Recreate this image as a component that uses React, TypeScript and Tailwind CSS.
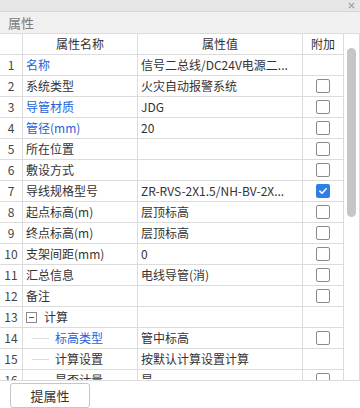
import * as React from "react"

type Row = {
  no: number
  name: string
  value?: string
  blue?: boolean
  check?: "on" | "off"
  kind?: "group" | "child"
}

const rows: Row[] = [
  { no: 1, name: "名称", value: "信号二总线/DC24V电源二...", blue: true },
  { no: 2, name: "系统类型", value: "火灾自动报警系统", check: "off" },
  { no: 3, name: "导管材质", value: "JDG", blue: true, check: "off" },
  { no: 4, name: "管径(mm)", value: "20", blue: true, check: "off" },
  { no: 5, name: "所在位置", check: "off" },
  { no: 6, name: "敷设方式", check: "off" },
  { no: 7, name: "导线规格型号", value: "ZR-RVS-2X1.5/NH-BV-2X...", check: "on" },
  { no: 8, name: "起点标高(m)", value: "层顶标高", check: "off" },
  { no: 9, name: "终点标高(m)", value: "层顶标高", check: "off" },
  { no: 10, name: "支架间距(mm)", value: "0", check: "off" },
  { no: 11, name: "汇总信息", value: "电线导管(消)", check: "off" },
  { no: 12, name: "备注", check: "off" },
  { no: 13, name: "计算", kind: "group" },
  { no: 14, name: "标高类型", value: "管中标高", blue: true, check: "off", kind: "child" },
  { no: 15, name: "计算设置", value: "按默认计算设置计算", kind: "child" },
  { no: 16, name: "是否计量", value: "是", check: "off", kind: "child" },
]

function Check({ on }: { on: boolean }) {
  if (on) {
    return (
      <span className="flex h-[14px] w-[14px] items-center justify-center rounded-[2px] bg-[#2f7fe6]">
        <svg viewBox="0 0 12 12" className="h-[10px] w-[10px]" aria-hidden="true">
          <path d="M2.2 6.2 4.8 8.6 9.8 3.4" stroke="#fff" strokeWidth="1.8" fill="none" strokeLinecap="round" strokeLinejoin="round" />
        </svg>
      </span>
    )
  }
  return <span className="block h-[14px] w-[14px] rounded-[2px] border border-[#8a8a8a] bg-white" />
}

function NameCell({ row }: { row: Row }) {
  const color = row.blue ? "text-[#2462d8]" : "text-[#333]"
  if (row.kind === "group") {
    return (
      <div className="flex items-center pl-[3px]">
        <span className="flex h-[11px] w-[11px] items-center justify-center border border-[#8a8a8a] bg-white">
          <span className="block h-px w-[5px] bg-[#555]" />
        </span>
        <span className={`ml-[7px] ${color}`}>{row.name}</span>
      </div>
    )
  }
  if (row.kind === "child") {
    return (
      <div className="flex items-center">
        <span className="ml-[9px] block h-px w-[17px] bg-[#dcdcdc]" />
        <span className={`ml-[6px] truncate ${color}`}>{row.name}</span>
      </div>
    )
  }
  return <div className={`truncate pl-[3px] ${color}`}>{row.name}</div>
}

export default function App() {
  return (
    <div
      className="flex h-[408px] w-[360px] flex-col overflow-hidden bg-white text-[12px] text-[#333]"
      style={{ fontFamily: '"Noto Sans CJK SC", "Noto Sans", sans-serif' }}
    >
      <div className="flex h-[12px] shrink-0 items-center justify-end border-b border-[#d6d6d6] bg-[#e6e6e6] pr-[5px]">
        <svg viewBox="0 0 8 8" className="h-[7px] w-[7px]" aria-hidden="true">
          <path d="M1 1 7 7M7 1 1 7" stroke="#9a9a9a" strokeWidth="1.3" />
        </svg>
      </div>

      <div className="flex h-[21px] shrink-0 items-center bg-[#f0f0f0] pl-[8px] text-[13px] text-[#7a7a7a]">
        属性
      </div>

      <div className="flex h-[348px] shrink-0 border-y border-[#dcdcdc]">
        <div className="w-[343px] overflow-hidden">
          <div className="flex h-[21px] border-b border-[#dcdcdc] leading-[20px]">
            <div className="w-[23px] shrink-0 border-r border-[#dcdcdc]" />
            <div className="w-[115px] shrink-0 border-r border-[#dcdcdc] text-center">属性名称</div>
            <div className="w-[165px] shrink-0 border-r border-[#dcdcdc] text-center">属性值</div>
            <div className="flex-1 text-center">附加</div>
          </div>
          {rows.map((row) => (
            <div key={row.no} className="flex h-[21px] border-b border-[#dcdcdc] leading-[20px]">
              <div className="w-[23px] shrink-0 border-r border-[#dcdcdc] text-center text-[#444]">{row.no}</div>
              <div className="w-[115px] shrink-0 overflow-hidden border-r border-[#dcdcdc]">
                <NameCell row={row} />
              </div>
              <div className="w-[165px] shrink-0 truncate border-r border-[#dcdcdc] pl-[3px] pr-[4px]">
                {row.value}
              </div>
              <div className="flex flex-1 items-center justify-center">
                {row.check && <Check on={row.check === "on"} />}
              </div>
            </div>
          ))}
        </div>
        <div className="flex flex-1 justify-center border-x border-[#dcdcdc] pt-[14px]">
          <div className="h-[169px] w-[9px] rounded-full bg-[#c6c6c6]" />
        </div>
      </div>

      <div className="pl-[10px] pt-[2px]">
        <button
          type="button"
          className="h-[25px] w-[80px] rounded-[3px] border border-[#c6c6c6] bg-white text-[13px] text-[#333]"
        >
          提属性
        </button>
      </div>
    </div>
  )
}
